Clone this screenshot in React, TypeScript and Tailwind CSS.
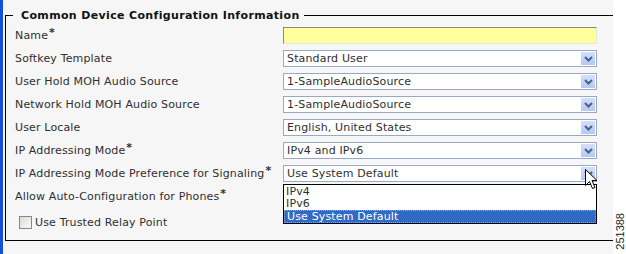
import type { ReactNode } from 'react';

const rows: { label: string; req?: boolean; value?: string }[] = [
  { label: 'Softkey Template', value: 'Standard User' },
  { label: 'User Hold MOH Audio Source', value: '1-SampleAudioSource' },
  { label: 'Network Hold MOH Audio Source', value: '1-SampleAudioSource' },
  { label: 'User Locale', value: 'English, United States' },
  { label: 'IP Addressing Mode', req: true, value: 'IPv4 and IPv6' },
];

function Label({ children, req }: { children: ReactNode; req?: boolean }) {
  return (
    <div className="flex items-center h-[17px] whitespace-nowrap tracking-[0.15px]">
      {children}
      {req && <span className="relative -top-[3px] ml-[1px] font-bold">*</span>}
    </div>
  );
}

function Arrow() {
  return (
    <div className="w-[16px] h-[15px] flex items-center justify-center bg-gradient-to-b from-[#d4e0fb] to-[#b4c8f2] border border-white">
      <svg width="9" height="6" viewBox="0 0 9 6">
        <path d="M1 1 L4.5 4.5 L8 1" fill="none" stroke="#4a5f8a" strokeWidth="2" />
      </svg>
    </div>
  );
}

function Select({ value }: { value: string }) {
  return (
    <div className="h-[17px] w-[314px] bg-white border border-[#98a9c2] flex items-center justify-between">
      <span className="pl-[3px] tracking-[0.15px]">{value}</span>
      <Arrow />
    </div>
  );
}

export default function App() {
  return (
    <div className="w-[626px] h-[254px] flex bg-white text-[11px] leading-[13px] text-[#2f2f2f] font-['DejaVu_Sans',Verdana,sans-serif] overflow-hidden">
      <div className="w-[3px] bg-[#1650d8]" />
      <div className="w-[610px] bg-[#f6f6f6] pl-[2px] pt-[9px] relative">
        <fieldset className="w-[608px] h-[232px] border-t border-l border-b border-black pl-[9px]">
          <legend className="ml-[-2px] pl-[8px] pr-[4px] font-bold text-[#111] tracking-[0.35px]">Common Device Configuration Information</legend>
          <div className="mt-[5px] flex flex-col gap-[6px]">
            <div className="flex">
              <div className="w-[268px]"><Label req>Name</Label></div>
              <div className="h-[17px] w-[314px] bg-[#ffff9c] border border-t-[#8a8a7a] border-l-[#8a8a7a] border-r-[#e8e8d8] border-b-[#e8e8d8]" />
            </div>
            {rows.map((r) => (
              <div className="flex" key={r.label}>
                <div className="w-[268px]"><Label req={r.req}>{r.label}</Label></div>
                <Select value={r.value!} />
              </div>
            ))}
            <div className="flex">
              <div className="w-[268px]"><Label req>IP Addressing Mode Preference for Signaling</Label></div>
              <div className="relative">
                <Select value="Use System Default" />
                <div className="absolute left-0 top-[19px] w-[314px] bg-white border border-black leading-[12px] tracking-[0.15px] z-10">
                  <div className="pl-[2px] h-[13px] pt-[1px]">IPv4</div>
                  <div className="pl-[2px] h-[12px]">IPv6</div>
                  <div className="pl-[2px] h-[13px] bg-[#316ac5] text-white border border-dotted border-[#9ab]">Use System Default</div>
                </div>
                <svg className="absolute left-[302px] top-[4px] z-20" width="13" height="21" viewBox="0 0 13 21">
                  <path d="M0.5 0.5 L0.5 16.5 L4.5 12.5 L7.5 19.5 L10 18.5 L7 11.5 L12 11.5 Z" fill="white" stroke="black" strokeWidth="1" />
                </svg>
              </div>
            </div>
            <Label req>Allow Auto-Configuration for Phones</Label>
            <div className="flex items-center h-[17px] mt-[3px] pl-[4px]">
              <div className="w-[13px] h-[13px] border border-[#7b8a99] bg-gradient-to-br from-[#dcdcd4] to-[#fafaf6]" />
              <span className="ml-[3px] tracking-[0.15px]">Use Trusted Relay Point</span>
            </div>
          </div>
        </fieldset>
      </div>
      <div className="flex-1 flex flex-col justify-end pb-[4px] items-center">
        <span className="[writing-mode:vertical-rl] rotate-180 text-[11px] leading-[10px] font-['Liberation_Sans',Arial,sans-serif] text-[#222]">251388</span>
      </div>
    </div>
  );
}
